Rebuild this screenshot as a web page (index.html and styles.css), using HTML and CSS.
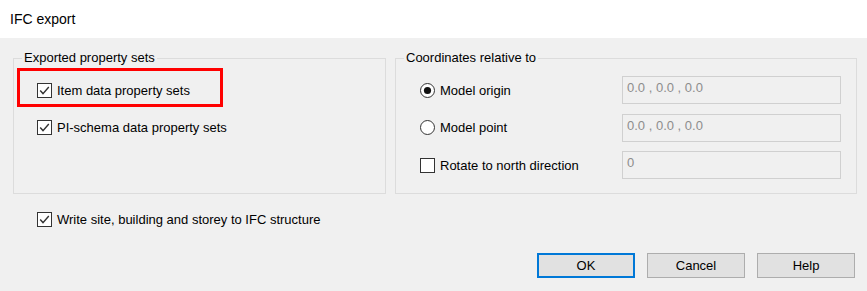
FILE: index.html
```html
<!DOCTYPE html>
<html lang="en">
<head>
  <meta charset="UTF-8" />
  <title>IFC export</title>
  <link rel="stylesheet" href="styles.css">
</head>
<body>

  <!-- Title bar -->
  <div class="titlebar">IFC export</div>

  <div class="dialog">
    <div class="groups">

      <fieldset class="group group-left">
        <legend>Exported property sets</legend>
        <div class="rows">
          <div class="highlight">
            <label class="row">
              <svg class="check" viewBox="0 0 15 15"><rect x="0.5" y="0.5" width="14" height="14" fill="#fff" stroke="#333"/><path d="M3.2 7.6 L6 10.6 L11.8 4" fill="none" stroke="#333" stroke-width="1.4"/></svg>
              <span>Item data property sets</span>
            </label>
          </div>
          <label class="row">
            <svg class="check" viewBox="0 0 15 15"><rect x="0.5" y="0.5" width="14" height="14" fill="#fff" stroke="#333"/><path d="M3.2 7.6 L6 10.6 L11.8 4" fill="none" stroke="#333" stroke-width="1.4"/></svg>
            <span>PI-schema data property sets</span>
          </label>
        </div>
      </fieldset>

      <fieldset class="group group-right">
        <legend>Coordinates relative to</legend>
        <div class="coord-grid">
          <label class="row">
            <svg class="radio" viewBox="0 0 15 15"><circle cx="7.5" cy="7.5" r="7" fill="#fff" stroke="#333"/><circle cx="7.5" cy="7.5" r="3.6" fill="#111"/></svg>
            <span>Model origin</span>
          </label>
          <div class="field">0.0 , 0.0 , 0.0</div>

          <label class="row">
            <svg class="radio" viewBox="0 0 15 15"><circle cx="7.5" cy="7.5" r="7" fill="#fff" stroke="#333"/></svg>
            <span>Model point</span>
          </label>
          <div class="field">0.0 , 0.0 , 0.0</div>

          <label class="row">
            <svg class="check" viewBox="0 0 15 15"><rect x="0.5" y="0.5" width="14" height="14" fill="#fff" stroke="#333"/></svg>
            <span>Rotate to north direction</span>
          </label>
          <div class="field">0</div>
        </div>
      </fieldset>

    </div>

    <label class="row structure">
      <svg class="check" viewBox="0 0 15 15"><rect x="0.5" y="0.5" width="14" height="14" fill="#fff" stroke="#333"/><path d="M3.2 7.6 L6 10.6 L11.8 4" fill="none" stroke="#333" stroke-width="1.4"/></svg>
      <span>Write site, building and storey to IFC structure</span>
    </label>

    <div class="buttons">
      <button class="btn default">OK</button>
      <button class="btn">Cancel</button>
      <button class="btn">Help</button>
    </div>
  </div>

</body>
</html>
```

FILE: styles.css
```css
body {
  margin: 0;
  padding: 0;
  width: 867px;
  height: 291px;
  overflow: hidden;
  font-family: 'Liberation Sans', Arial, sans-serif;
  font-size: 13px;
  color: #000;
  background: #f0f0f0;
}

.titlebar {
  height: 38px;
  background: #fff;
  display: flex;
  align-items: center;
  padding-left: 10px;
  font-size: 14px;
  padding-bottom: 1px;
  box-sizing: border-box;
}

.dialog {
  padding: 12px 10px 0 13px;
}

.groups {
  display: flex;
  gap: 9px;
}

.group {
  margin: 0;
  border: 1px solid #dcdcdc;
  padding: 10px 0 14px;
  box-sizing: border-box;
}

.group legend {
  margin-left: 8px;
  padding: 0 2px;
  line-height: 16px;
}

.group-left {
  width: 373px;
}

.group-right {
  width: 462px;
}

.rows {
  display: flex;
  flex-direction: column;
  gap: 9.5px;
  margin-left: 23px;
}

.row {
  display: flex;
  align-items: center;
  gap: 5px;
  height: 28px;
  white-space: nowrap;
}

.check, .radio {
  width: 15px;
  height: 15px;
  flex-shrink: 0;
}

/* red annotation frame round the first option */
.highlight {
  border: 3px solid #ff0000;
  padding: 5px 0 0 17px;
  margin: -8px 0 -3px -20px;
  width: 206px;
  box-sizing: border-box;
}

.coord-grid {
  display: grid;
  grid-template-columns: 202px 219px;
  row-gap: 9.5px;
  margin-left: 24px;
}

.field {
  height: 28px;
  box-sizing: border-box;
  border: 1px solid #d0d0d0;
  background: #f0f0f0;
  color: #8d8d8d;
  padding: 3px 4px 0;
  line-height: 16px;
}

.structure {
  margin: 11px 0 0 24px;
}

.buttons {
  display: flex;
  justify-content: flex-end;
  gap: 12px;
  margin-top: 20px;
  padding-right: 2px;
}

.btn {
  width: 98px;
  height: 25px;
  background: #e1e1e1;
  border: 1px solid #adadad;
  font-family: 'Liberation Sans', Arial, sans-serif;
  font-size: 13px;
  color: #000;
  padding: 0;
}

.btn.default {
  border: 2px solid #0078d7;
}
```
